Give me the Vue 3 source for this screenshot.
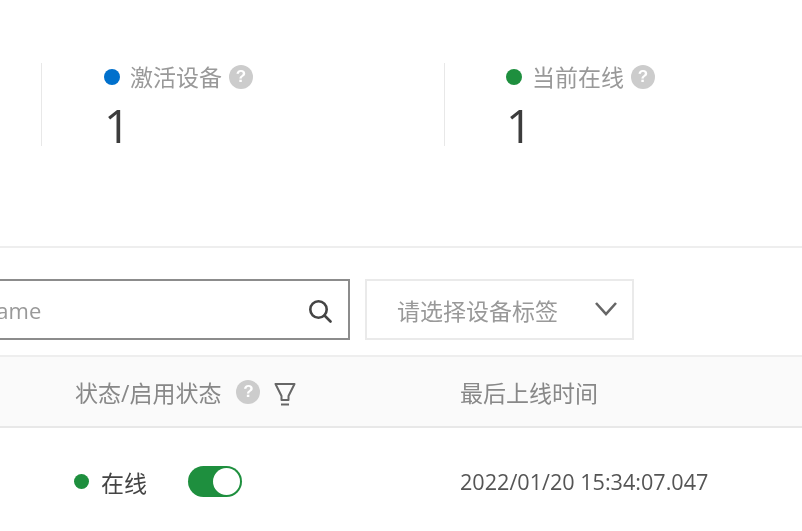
<script setup>
const stats = [
  { label: '激活设备', value: '1', color: '#0070cc' },
  { label: '当前在线', value: '1', color: '#1e8f3e' }
]
</script>

<template>
  <div class="page">
    <section class="stats">
      <div v-for="s in stats" :key="s.label" class="stat">
        <div class="stat-label">
          <span class="dot big" :style="{ background: s.color }"></span>
          <span class="label-text">{{ s.label }}</span>
          <span class="help">?</span>
        </div>
        <div class="stat-value">{{ s.value }}</div>
      </div>
    </section>

    <section class="toolbar">
      <div class="search">
        <span class="placeholder">DeviceName</span>
        <svg class="search-icon" viewBox="0 0 24 24" width="24" height="24" fill="none" stroke="#444" stroke-width="2.6">
          <circle cx="10.5" cy="10.5" r="8.2" />
          <path d="M16.5 16.5L22.5 22.5" stroke-linecap="round" />
        </svg>
      </div>
      <div class="select">
        <span>请选择设备标签</span>
        <svg class="chevron" viewBox="0 0 24 16" width="24" height="16" fill="none" stroke="#666" stroke-width="2.6">
          <path d="M2 2L12 13L22 2" />
        </svg>
      </div>
    </section>

    <section class="table">
      <div class="thead">
        <div></div>
        <div class="th">
          <span>状态/启用状态</span>
          <span class="help th-help">?</span>
          <svg class="filter" viewBox="0 0 22 24" width="22" height="24" fill="none" stroke="#666" stroke-width="2">
            <path d="M1.5 2H20.5L14.5 14V18H7.5V14Z" stroke-linejoin="round" />
            <path d="M7 22.5H15" />
          </svg>
        </div>
        <div class="th">最后上线时间</div>
      </div>
      <div class="tr">
        <div></div>
        <div class="status">
          <span class="dot small"></span>
          <span class="status-text">在线</span>
          <span class="switch"><span class="knob"></span></span>
        </div>
        <div class="time">2022/01/20 15:34:07.047</div>
      </div>
    </section>
  </div>
</template>

<style>
html, body { margin: 0; background: #fff; overflow: hidden; }
</style>

<style scoped>
.page {
  width: 802px;
  height: 531px;
  overflow: hidden;
  background: #fff;
  padding-top: 63px;
  box-sizing: border-box;
  font-family: "Open Sans", "Noto Sans CJK SC", sans-serif;
  filter: blur(0.45px);
}
.stats {
  display: grid;
  grid-template-columns: 403px 358px;
  margin-left: 41px;
  height: 183px;
}
.stat {
  height: 83px;
  border-left: 1px solid #e8e8e8;
  padding-left: 62px;
}
.stat + .stat { padding-left: 61px; }
.stat-label {
  display: flex;
  align-items: center;
  height: 28px;
  color: #999;
  font-size: 23px;
  line-height: 28px;
}
.dot { display: inline-block; border-radius: 50%; flex: none; }
.dot.big { width: 16px; height: 16px; margin-right: 10px; }
.dot.small { width: 15px; height: 15px; background: #1e8f3e; margin-right: 12px; }
.help {
  flex: none;
  width: 24px;
  height: 24px;
  margin-left: 7px;
  border-radius: 50%;
  background: #ccc;
  color: #fff;
  font: bold 17px/24px "Liberation Sans", sans-serif;
  text-align: center;
}
.stat-value {
  margin-top: 6px;
  font-size: 46px;
  line-height: 56px;
  font-weight: 400;
  color: #3c3c3c;
}
.toolbar {
  display: flex;
  align-items: stretch;
  height: 61px;
  border-top: 2px solid #eee;
  padding-top: 31px;
  gap: 15px;
}
.search {
  margin-left: -110px;
  width: 460px;
  height: 61px;
  box-sizing: border-box;
  border: 2px solid #8c8c8c;
  display: flex;
  align-items: center;
  justify-content: space-between;
  padding: 0 16px 0 20px;
  flex: none;
}
.placeholder { color: #999; font-size: 22px; }
.search-icon { margin-top: 2px; }
.select {
  width: 269px;
  height: 61px;
  box-sizing: border-box;
  border: 2px solid #eaeaea;
  display: flex;
  align-items: center;
  justify-content: space-between;
  padding: 0 14px 0 30px;
  color: #999;
  font-size: 23px;
  flex: none;
}
.chevron { margin-top: -2px; }
.table { margin-top: 15px; }
.thead, .tr {
  display: grid;
  grid-template-columns: 75px 385px 1fr;
  align-items: center;
}
.thead {
  height: 73px;
  box-sizing: border-box;
  background: #fafafa;
  border-top: 2px solid #eee;
  border-bottom: 2px solid #e8e8e8;
  color: #888;
  font-size: 23px;
}
.th { display: flex; align-items: center; }
.th-help { margin-left: 15px; }
.filter { margin-left: 14px; margin-top: 4px; }
.tr { height: 107px; }
.status { display: flex; align-items: center; color: #444; font-size: 23px; margin-left: -1px; }
.switch {
  width: 54px;
  height: 31px;
  margin-left: 41px;
  border-radius: 16px;
  background: #1e8f3e;
  position: relative;
}
.knob {
  position: absolute;
  right: 2px;
  top: 2px;
  width: 27px;
  height: 27px;
  border-radius: 50%;
  background: #fff;
}
.time { color: #555; font-size: 21.6px; }
</style>
